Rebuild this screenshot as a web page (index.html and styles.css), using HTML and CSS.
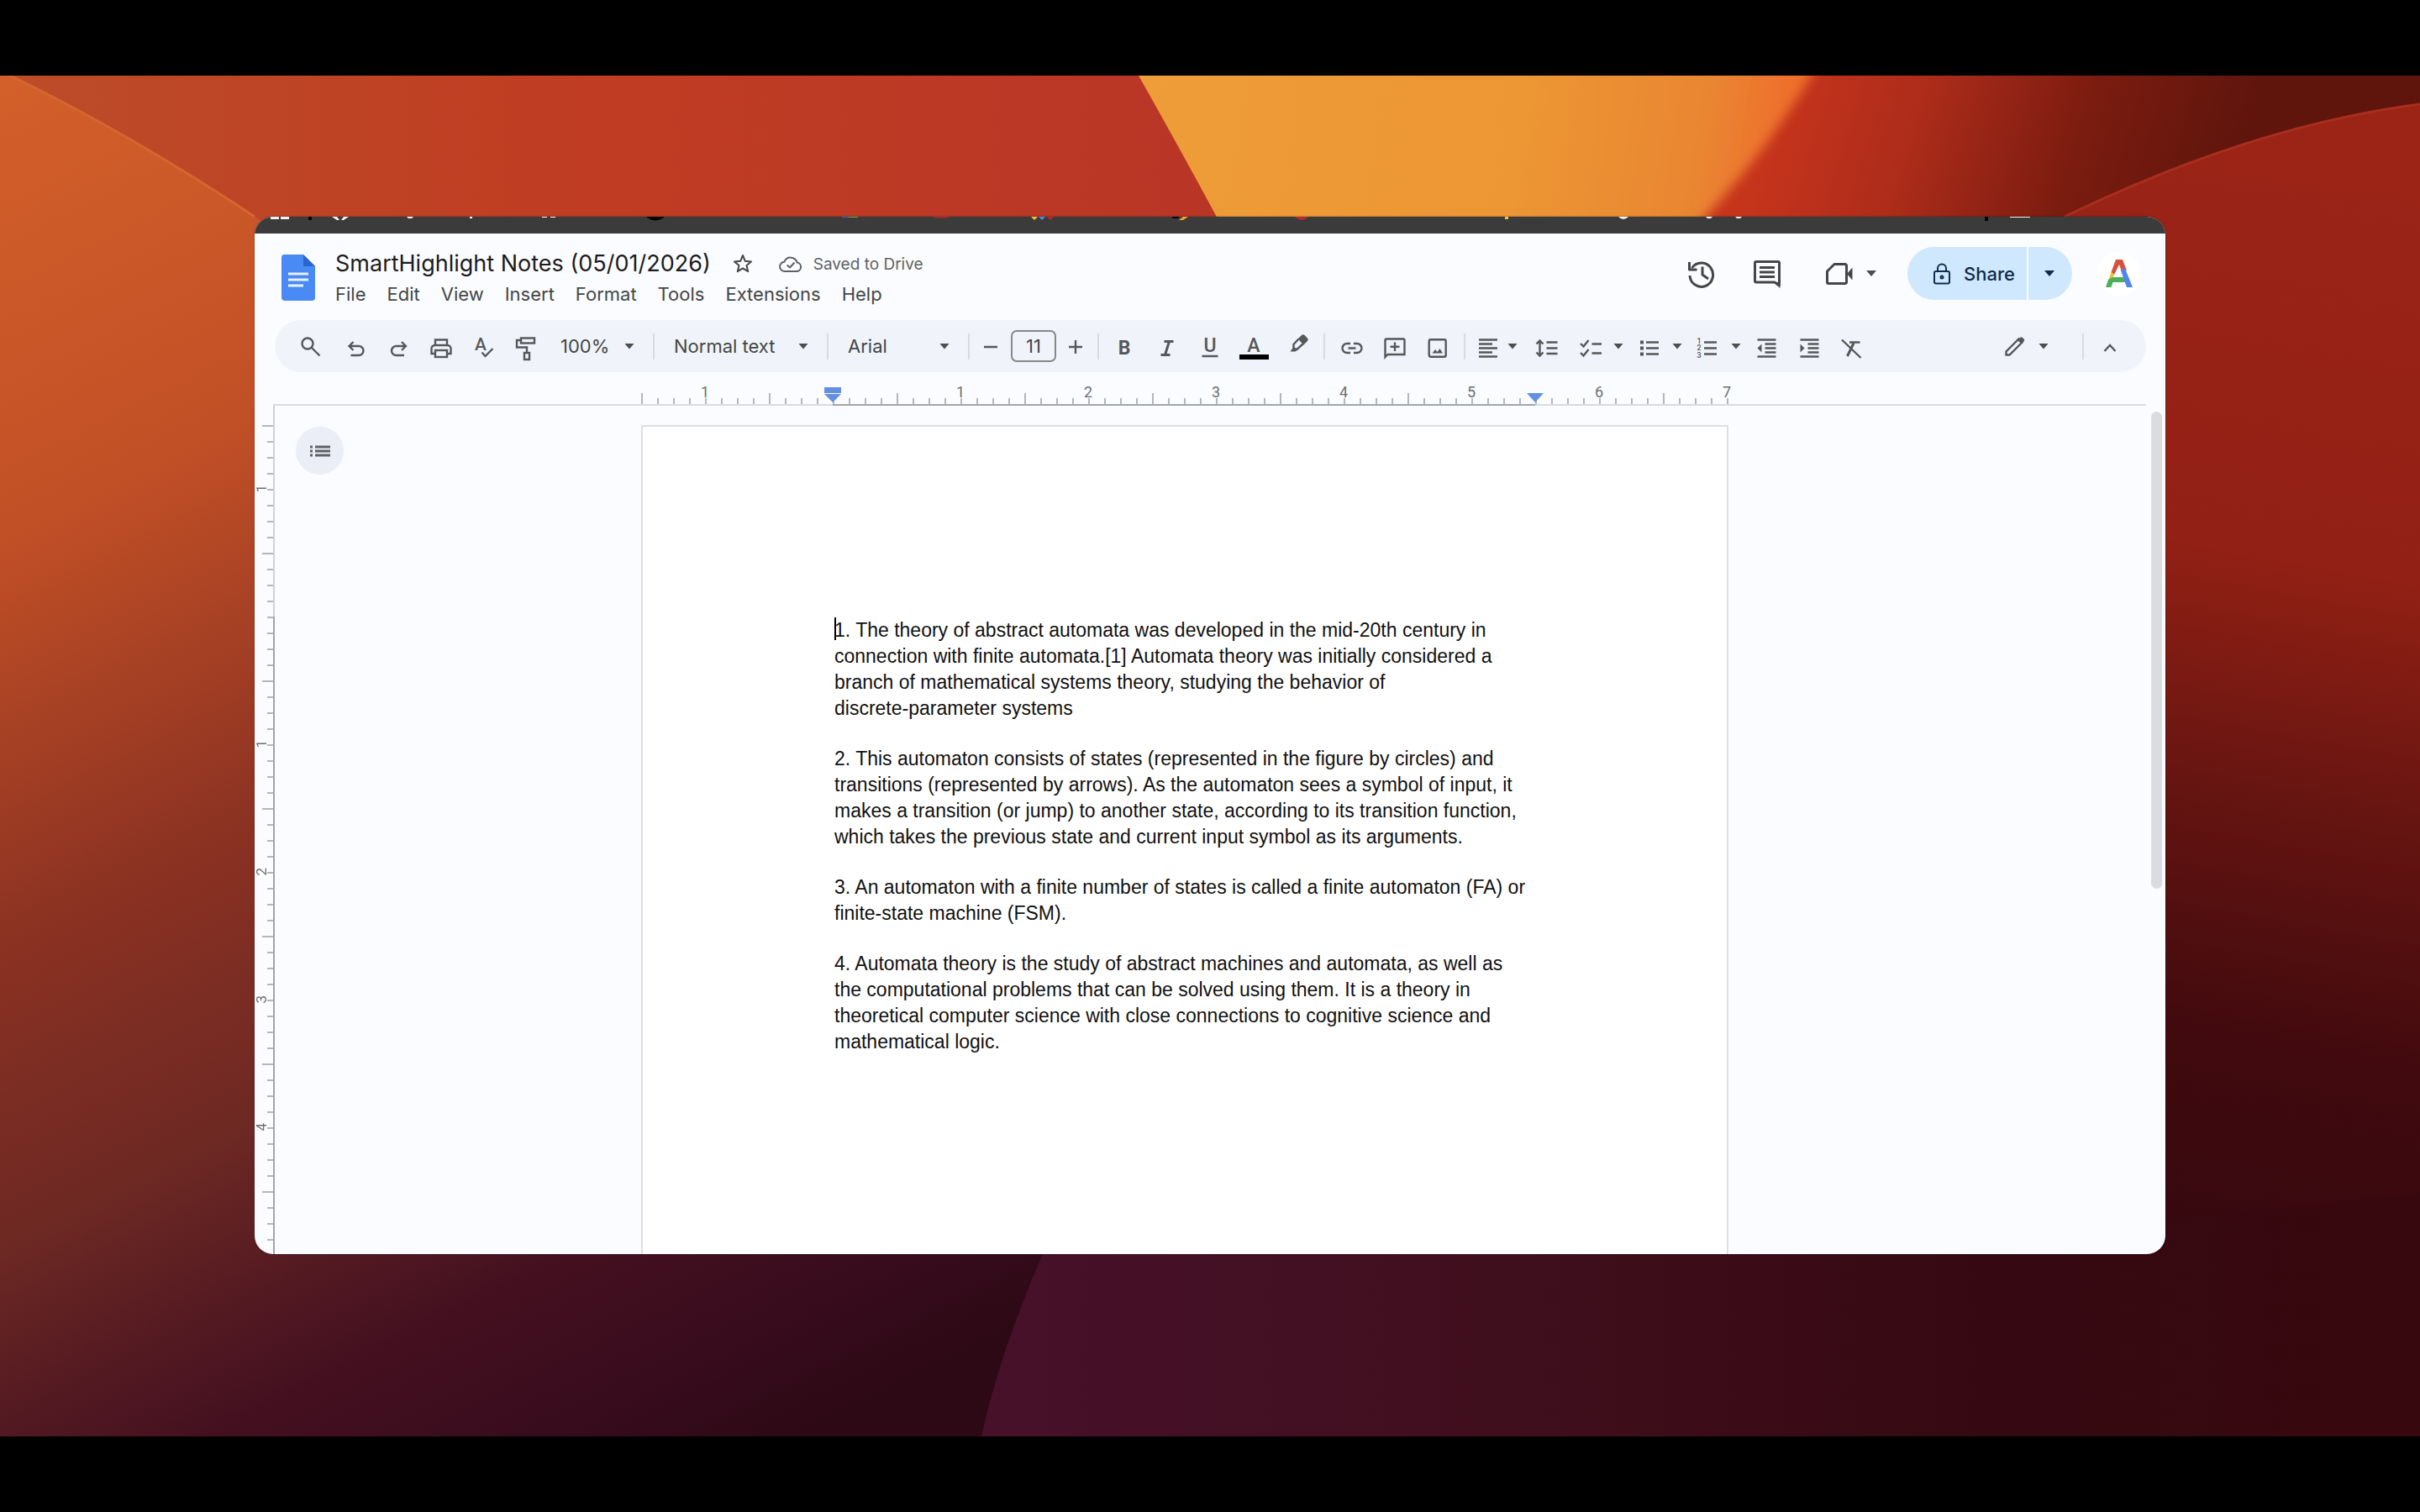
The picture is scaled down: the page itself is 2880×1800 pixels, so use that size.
FILE: index.html
```html
<!DOCTYPE html>
<html lang="en">
<head>
  <meta charset="UTF-8">
  <meta name="viewport" content="width=device-width, initial-scale=1.0">
  <title>SmartHighlight Notes (05/01/2026)</title>
  <link rel="stylesheet" href="styles.css">
</head>
<body>
  <main class="desktop">
    <svg class="wallpaper" viewBox="0 0 2880 1620" preserveAspectRatio="none" aria-hidden="true">
      <defs>
        <linearGradient id="w-top" x1="0" y1="0" x2="1" y2="0">
          <stop offset="0" stop-color="#bc4c29"/>
          <stop offset="0.25" stop-color="#c03c22"/>
          <stop offset="0.5" stop-color="#b93627"/>
        </linearGradient>
        <linearGradient id="w-left" gradientUnits="userSpaceOnUse" x1="0" y1="0" x2="840" y2="1680">
          <stop offset="0" stop-color="#d3602a"/>
          <stop offset="0.26" stop-color="#c25026"/>
          <stop offset="0.5" stop-color="#8a3122"/>
          <stop offset="0.67" stop-color="#6c2823"/>
          <stop offset="0.74" stop-color="#591d22"/>
          <stop offset="0.83" stop-color="#441020"/>
          <stop offset="0.94" stop-color="#360b1c"/>
          <stop offset="1" stop-color="#2c0914"/>
        </linearGradient>
        <linearGradient id="w-gold" gradientUnits="userSpaceOnUse" x1="1360" y1="0" x2="2110" y2="120">
          <stop offset="0" stop-color="#ee9d38"/>
          <stop offset="0.6" stop-color="#ec9634"/>
          <stop offset="0.88" stop-color="#e98632"/>
          <stop offset="1" stop-color="#ee702c"/>
        </linearGradient>
        <linearGradient id="w-dark" gradientUnits="userSpaceOnUse" x1="2100" y1="80" x2="2620" y2="240">
          <stop offset="0" stop-color="#c6341c"/>
          <stop offset="0.3" stop-color="#ad2c1a"/>
          <stop offset="0.65" stop-color="#7c1c10"/>
          <stop offset="1" stop-color="#5f150c"/>
        </linearGradient>
        <linearGradient id="w-right" gradientUnits="userSpaceOnUse" x1="2880" y1="60" x2="2640" y2="1380">
          <stop offset="0" stop-color="#9c2417"/>
          <stop offset="0.4" stop-color="#922014"/>
          <stop offset="0.62" stop-color="#641411"/>
          <stop offset="0.82" stop-color="#420a0e"/>
          <stop offset="1" stop-color="#36090f"/>
        </linearGradient>
        <linearGradient id="w-bottom" gradientUnits="userSpaceOnUse" x1="1170" y1="0" x2="2880" y2="0">
          <stop offset="0" stop-color="#47112a"/>
          <stop offset="0.35" stop-color="#400f1e"/>
          <stop offset="0.7" stop-color="#360912"/>
          <stop offset="1" stop-color="#37080d"/>
        </linearGradient>
        <filter id="w-soft" x="-10%" y="-10%" width="120%" height="120%">
          <feGaussianBlur stdDeviation="7"/>
        </filter>
      </defs>
      <rect width="2880" height="1620" fill="url(#w-top)"/>
      <path d="M1900-60H2900V1000H1900Z" fill="url(#w-dark)"/>
      <path d="M1700-40H2178Q2120 70 2030 168L1900 380H1700Z" fill="url(#w-gold)" filter="url(#w-soft)"/>
      <path d="M1355 0H1900V360H1550Q1440 150 1355 0Z" fill="url(#w-gold)"/>
      <path d="M1200 1300H2880V1620H1100Z" fill="url(#w-bottom)"/>
      <path d="M2300 290Q2377 200 2457 168Q2680 60 2880 34V1330L2300 1390Z" fill="url(#w-right)"/>
      <path d="M2457 168Q2680 60 2880 34" fill="none" stroke="#a92e1e" stroke-width="3"/>
      <path d="M0-6Q150 66 303 168C1000 600 1420 1000 1241 1403Q1190 1520 1168 1620H0Z" fill="url(#w-left)"/>
      <path d="M0-6Q150 66 303 168" fill="none" stroke="#d6652f" stroke-width="3"/>
    </svg>

    <div class="window">
      <div class="tabstrip">
        <!-- lower edge of the tab favicons -->
        <svg viewBox="0 0 2274 6" preserveAspectRatio="none" aria-hidden="true">
          <path d="M19 0h10v3H19zM31 0h10v3H31zM92 0l6 4h3l-3-4zM112 0l-6 4h-3l3-4zM181 0h8l-2 2h-4zM256 0h3v2h-3zM342 0h6v1h-6zM352 0h6v1h-6zM1623 0h12q-6 6-12 0zM1727 0h8l-2 2h-4zM1762 0h8l-2 2h-4zM2089 0h24v1h-24z" fill="#f4f4f4"/>
          <path d="M64 0h4v4h-4zM466 0h22q-11 9-22 0zM1092 0h8v2h-8zM2059 0h4v5h-4z" fill="#060606"/>
          <path d="M699 0h8v1h-8z" fill="#2f6fd0"/>
          <path d="M707 0h11v1h-11z" fill="#4fae54"/>
          <path d="M806 0h22q-11 3-22 0zM943 0h8l-4 4zM1238 0h16q-8 8-16 0z" fill="#b02a30"/>
          <path d="M924 0h8l-4 4zM1488 0h4v3h-4z" fill="#f2bd4a"/>
          <path d="M933 0h8l-4 4z" fill="#4b8fd8"/>
          <path d="M1100 4l5-4h6l-6 4z" fill="#f0a13a"/>
        </svg>
      </div>

      <header class="header">
        <a class="home" href="#" aria-label="Docs home">
          <svg width="40" height="55" viewBox="0 0 40 55">
            <path d="M3 0H26L40 14V51Q40 55 36 55H4Q0 55 0 51V4Q0 0 3 0Z" fill="#4a8af4"/>
            <path d="M26 0L40 14H26Z" fill="#2b66cf"/>
            <path d="M8 23H32M8 30H32M8 37H26" stroke="#e8f1fd" stroke-width="3"/>
          </svg>
        </a>
        <div class="doc-info">
          <div class="title-row">
            <h1 class="title">SmartHighlight Notes (05/01/2026)</h1>
            <button class="star" aria-label="Star">
              <svg width="24" height="24" viewBox="0 0 24 24" class="line">
                <path d="M12 2l2.800 6.800 7.200.6-5.500 4.700 1.700 7.100-6.200-3.800-6.200 3.800 1.700-7.100L2 9.400l7.200-.6z"/>
              </svg>
            </button>
            <button class="status">
              <svg width="28" height="22" viewBox="0 0 28 22" class="line">
                <path d="M7 20a5.600 5.600 0 0 1-.6-11.200A8 8 0 0 1 21.600 9.500A5.300 5.300 0 0 1 21.500 20Z"/>
                <path d="M9.500 12.500l3.500 3 5.500-6"/>
              </svg>
              Saved to Drive
            </button>
          </div>
          <nav class="menubar">
            <button>File</button>
            <button>Edit</button>
            <button>View</button>
            <button>Insert</button>
            <button>Format</button>
            <button>Tools</button>
            <button>Extensions</button>
            <button>Help</button>
          </nav>
        </div>
        <div class="header-actions">
          <button class="action" aria-label="Version history">
            <svg width="36" height="36" viewBox="0 0 36 36" class="line bold">
              <path d="M6.500 11A13.800 14.200 0 1 1 4 20"/>
              <path d="M19 9.500v9.500l7 5"/>
              <path d="M3.500 4v9h9"/>
            </svg>
          </button>
          <button class="action" aria-label="Comments">
            <svg width="36" height="36" viewBox="0 0 36 36" class="line bold">
              <path d="M5 3.500H31Q32.500 3.500 32.500 5V31L27 28H5Q3.500 28 3.500 26.500V5Q3.500 3.500 5 3.500Z"/>
              <path d="M9 10.500H27M9 16H27M9 21.500H27"/>
              <path d="M25 28H33.500V35z" class="solid"/>
            </svg>
          </button>
          <button class="action meet" aria-label="Meet">
            <svg width="36" height="36" viewBox="0 0 36 36" class="line bold">
              <path d="M12 6.500H24.500Q26.500 6.500 26.500 8.500V27.500Q26.500 29.500 24.500 29.500H5Q3.500 29.500 3.500 27.500V15Z"/>
              <path d="M27 18L33.500 10.500V25.500Z" class="solid"/>
            </svg>
            <span class="arrow"></span>
          </button>
          <div class="share">
            <button class="share-main">
              <svg width="22" height="26" viewBox="0 0 22 26" class="line">
                <rect x="2" y="10" width="18" height="14.500" rx="2"/>
                <path d="M6 10V6.500a5 5 0 0 1 10 0V10"/>
                <circle cx="11" cy="17" r="1.500"/>
              </svg>
              Share
            </button>
            <button class="share-more" aria-label="Sharing options"><span class="arrow"></span></button>
          </div>
          <a class="avatar" href="#" aria-label="Account">
            <svg width="32" height="33" viewBox="0 0 32 33">
              <path d="M12 0H20L25 13H18.500L16 6L10 18L6.500 15Z" fill="#d5523f"/>
              <path d="M6.500 15L10 18L8 24L3 25Z" fill="#f1c232"/>
              <path d="M3 24L8 21H22L23 27H8.500L6.500 33H0Z" fill="#4caf5a"/>
              <path d="M25 33L17.500 12L22.500 11L24 13L32 33Z" fill="#5285ec"/>
              <path d="M16 8L11.500 21H20.500Z" fill="#ffffff"/>
            </svg>
          </a>
        </div>
      </header>

      <div class="toolbar" role="toolbar">
        <button class="tool" aria-label="Search the menus">
          <svg class="icon" viewBox="0 0 30 30"><circle cx="11" cy="12" r="6.500"/><path d="M16 17l9.500 9.500"/></svg>
        </button>
        <button class="tool" aria-label="Undo">
          <svg class="icon" viewBox="0 0 30 30"><path d="M9.500 15H21a5.500 5.500 0 0 1 0 11H11.500M14.500 10l-5 5 5 5"/></svg>
        </button>
        <button class="tool" aria-label="Redo">
          <svg class="icon" viewBox="0 0 30 30"><path d="M26 15H14.500a5.500 5.500 0 0 0 0 11H24M21 10l5 5-5 5"/></svg>
        </button>
        <button class="tool" aria-label="Print">
          <svg class="icon" viewBox="0 0 30 30"><path d="M10 14V7.500H24V14M10 24H5.500V18a4 4 0 0 1 4-4H24.500a4 4 0 0 1 4 4V24H24"/><rect x="10" y="20" width="14" height="8"/></svg>
        </button>
        <button class="tool" aria-label="Spelling and grammar check">
          <svg class="icon" viewBox="0 0 30 30"><text x="13" y="20" class="glyph glyph-small">A</text><path d="M14.500 22.500l4 4.500 9-9"/></svg>
        </button>
        <button class="tool" aria-label="Paint format">
          <svg class="icon" viewBox="0 0 30 30"><rect x="10" y="5.500" width="16" height="6"/><path d="M10 8H5V16.500H17V23"/><rect x="14" y="23" width="6" height="8"/></svg>
        </button>
        <label class="dropdown dropdown-zoom">
          <select aria-label="Zoom"><option>100%</option></select>
          <span class="arrow"></span>
        </label>
        <span class="sep"></span>
        <label class="dropdown dropdown-style">
          <select aria-label="Styles"><option>Normal text</option></select>
          <span class="arrow"></span>
        </label>
        <span class="sep"></span>
        <label class="dropdown dropdown-font">
          <select aria-label="Font"><option>Arial</option></select>
          <span class="arrow"></span>
        </label>
        <span class="sep"></span>
        <div class="font-size">
          <button aria-label="Decrease font size">
            <svg class="icon" viewBox="0 0 30 30"><path d="M7 16H23"/></svg>
          </button>
          <input type="text" value="11" aria-label="Font size">
          <button aria-label="Increase font size">
            <svg class="icon" viewBox="0 0 30 30"><path d="M6 16H22M14 8V24"/></svg>
          </button>
        </div>
        <span class="sep"></span>
        <button class="tool" aria-label="Bold">
          <svg class="icon" viewBox="0 0 30 30"><text x="13" y="25" class="glyph glyph-bold">B</text></svg>
        </button>
        <button class="tool" aria-label="Italic">
          <svg class="icon" viewBox="0 0 30 30"><path d="M9.500 9.500H20.500M5.500 25.500H16.500M15.500 9.500L10.500 25.500" stroke-width="3"/></svg>
        </button>
        <button class="tool" aria-label="Underline">
          <svg class="icon" viewBox="0 0 30 30"><text x="13" y="22" class="glyph">U</text><path d="M3.500 27H22.500"/></svg>
        </button>
        <button class="tool" aria-label="Text color">
          <svg class="icon" viewBox="0 0 30 30"><text x="14" y="22" class="glyph">A</text><rect x="-3" y="25" width="35" height="6" class="swatch"/></svg>
        </button>
        <button class="tool" aria-label="Highlight color">
          <svg class="icon" viewBox="0 0 30 30"><path d="M16.500 6.500L10.500 13v5l4 1 7.500-7"/><path d="M15.500 6.500L20 2q2-1.500 3.500 0L27 5.500q1.500 2 0 3.500L22.500 13.500z" class="solid"/><path d="M6.500 21.500l4-5.500 4 4-2 1.500z" class="solid"/></svg>
        </button>
        <span class="sep"></span>
        <button class="tool" aria-label="Insert link">
          <svg class="icon" viewBox="0 0 30 30"><path d="M13 12H9a5.500 5.500 0 0 0 0 11h4M17 12h4a5.500 5.500 0 0 1 0 11h-4M10.500 17.500h9"/></svg>
        </button>
        <button class="tool" aria-label="Add comment">
          <svg class="icon" viewBox="0 0 30 30"><path d="M3.500 28V8Q3.500 6.500 5 6.500H25Q26.500 6.500 26.500 8V25H6.500zM15 10.500V21M9.500 15.700H20.500"/></svg>
        </button>
        <button class="tool" aria-label="Insert image">
          <svg class="icon" viewBox="0 0 30 30"><rect x="4.700" y="7.200" width="20" height="20.500" rx="2"/><path d="M8.500 23.500l3.500-4.500 2.500 3 3-4 3.500 5.500z" class="solid"/></svg>
        </button>
        <span class="sep"></span>
        <button class="tool-menu tool-menu-tight" aria-label="Align">
          <svg class="icon" viewBox="0 0 30 30"><path d="M4 7.500H26M4 12.500H20M4 17.500H26M4 22.500H20M4 27.500H26"/></svg>
          <span class="arrow"></span>
        </button>
        <button class="tool" aria-label="Line &amp; paragraph spacing">
          <svg class="icon" viewBox="0 0 30 30"><path d="M6.500 9V26M2.500 12.500l4-4 4 4M2.500 22.500l4 4 4-4M14.500 10.500H27.500M14.500 17.500H27.500M14.500 24H27.500"/></svg>
        </button>
        <button class="tool-menu" aria-label="Checklist menu">
          <svg class="icon" viewBox="0 0 30 30"><path d="M3 12l3.500 3.500 6-7.500M3 23l3.500 3.500 6-7.500M16.500 12.500H28M16.500 23.500H28"/></svg>
          <span class="arrow"></span>
        </button>
        <button class="tool-menu" aria-label="Bulleted list menu">
          <svg class="icon" viewBox="0 0 30 30"><path d="M11 10.500H26M11 17.500H26M11 24.500H26"/><path d="M4 8.500h4v4H4zM4 15.500h4v4H4zM4 22.500h4v4H4z" class="solid"/></svg>
          <span class="arrow"></span>
        </button>
        <button class="tool-menu" aria-label="Numbered list menu">
          <svg class="icon" viewBox="0 0 30 30"><path d="M10 10.500H25M10 17.500H25M10 24.500H25"/><text x="4" y="12" class="digit">1</text><text x="4" y="20" class="digit">2</text><text x="4" y="29" class="digit">3</text></svg>
          <span class="arrow"></span>
        </button>
        <button class="tool" aria-label="Decrease indent">
          <svg class="icon" viewBox="0 0 30 30"><path d="M4.500 7.500H26.500M13.500 12.500H26.500M13.500 17.500H26.500M13.500 22.500H26.500M4.500 27.500H26.500"/><path d="M9.500 12.500v10l-5-5z" class="solid"/></svg>
        </button>
        <button class="tool" aria-label="Increase indent">
          <svg class="icon" viewBox="0 0 30 30"><path d="M4.500 7.500H26.500M13.500 12.500H26.500M13.500 17.500H26.500M13.500 22.500H26.500M4.500 27.500H26.500"/><path d="M4.500 12.500v10l5-5z" class="solid"/></svg>
        </button>
        <button class="tool" aria-label="Clear formatting">
          <svg class="icon" viewBox="0 0 30 30"><path d="M12 10.500H24.500M3 7.500L25.500 29"/><path d="M17 11.500L9.500 27" stroke-width="3"/></svg>
        </button>
        <button class="tool-menu tool-mode" aria-label="Editing mode">
          <svg class="icon" viewBox="0 0 30 30"><path d="M3.500 25.500V21.500L18.500 6.500L22.500 10.500L7.500 25.500z"/><path d="M17 8l3-3q1.500-1.500 3 0l1.500 1.500q1.500 1.500 0 3L21.500 12.500z" class="solid"/></svg>
          <span class="arrow"></span>
        </button>
        <span class="sep"></span>
        <button class="tool" aria-label="Hide the menus">
          <svg class="icon" viewBox="0 0 30 30"><path d="M7.500 21l6.500-7 6.500 7"/></svg>
        </button>
      </div>

      <div class="ruler">
        <div class="ruler-track">
          <span class="inch">1</span>
          <span class="inch"></span>
          <span class="inch">1</span>
          <span class="inch">2</span>
          <span class="inch">3</span>
          <span class="inch">4</span>
          <span class="inch">5</span>
          <span class="inch">6</span>
          <span class="inch inch-last">7</span>
          <span class="ruler-range"></span>
          <svg class="marker marker-left" width="20" height="18" viewBox="0 0 20 18" aria-hidden="true">
            <path d="M0 0H20V7H0zM0 8H20L10 18z"/>
          </svg>
          <svg class="marker marker-right" width="20" height="18" viewBox="0 0 20 18" aria-hidden="true">
            <path d="M0 7H20L10 18z"/>
          </svg>
        </div>
      </div>

      <div class="workspace">
        <div class="vruler">
          <span class="vinch"><b>1</b></span>
          <span class="vinch vinch-split"></span>
          <span class="vinch vinch-dark"><b>1</b></span>
          <span class="vinch vinch-dark"><b>2</b></span>
          <span class="vinch vinch-dark"><b>3</b></span>
          <span class="vinch vinch-dark"><b>4</b></span>
          <span class="vinch vinch-dark"></span>
        </div>
        <div class="canvas">
          <button class="outline" aria-label="Show document outline">
            <svg width="24" height="16" viewBox="0 0 24 16">
              <path d="M6 3H24M6 8H24M6 13H24" stroke="#5f6368" stroke-width="3"/>
              <path d="M0 3H3M0 8H3M0 13H3" stroke="#5f6368" stroke-width="3"/>
            </svg>
          </button>
          <article class="page">
            <p><span class="caret"></span>1. The theory of abstract automata was developed in the mid-20th century in connection with finite automata.[1] Automata theory was initially considered a branch of mathematical systems theory, studying the behavior of <span class="nobreak">discrete-parameter</span> systems</p>
            <p>2. This automaton consists of states (represented in the figure by circles) and transitions (represented by arrows). As the automaton sees a symbol of input, it makes a transition (or jump) to another state, according to its transition function, which takes the previous state and current input symbol as its arguments.</p>
            <p>3. An automaton with a finite number of states is called a finite automaton (FA) or finite-state machine (FSM).</p>
            <p>4. Automata theory is the study of abstract machines and automata, as well as the computational problems that can be solved using them. It is a theory in theoretical computer science with close connections to cognitive science and mathematical logic.</p>
          </article>
        </div>
        <div class="scrollbar"><div class="thumb"></div></div>
      </div>
    </div>
  </main>
</body>
</html>
```
FILE: styles.css
```css
* {
  box-sizing: border-box;
}

body {
  margin: 0;
  height: 100vh;
  padding: 90px 0;
  background: #000;
  font-family: Inter, Roboto, sans-serif;
  font-size: 22px;
  color: #444746;
  overflow: hidden;
}

button,
select,
input {
  font: inherit;
  color: inherit;
  border: none;
  background: none;
  padding: 0;
  margin: 0;
}

button {
  cursor: pointer;
}

svg {
  display: block;
  flex: none;
}

/* desktop */
.desktop {
  position: relative;
  height: 100%;
  padding: 168px 303px 217px;
  overflow: hidden;
}

.wallpaper {
  position: absolute;
  inset: 0;
  width: 100%;
  height: 100%;
}

.window {
  position: relative;
  height: 100%;
  display: flex;
  flex-direction: column;
  background: #fbfcff;
  border-radius: 22px;
  overflow: hidden;
  box-shadow: 0 0 2px rgba(0, 0, 0, 0.5);
}

.tabstrip {
  height: 20px;
  flex: none;
  background: #3b3b3b;
}

.tabstrip svg {
  width: 100%;
  height: 6px;
}

/* icons */
.line {
  fill: none;
  stroke: currentColor;
  stroke-width: 2;
  stroke-linejoin: round;
}

.bold {
  stroke-width: 3;
}

.icon {
  width: 30px;
  height: 30px;
  overflow: visible;
  fill: none;
  stroke: #55585a;
  stroke-width: 2.4;
}

.solid {
  fill: currentColor;
  stroke: none;
}

.icon .solid {
  fill: #55585a;
}

.swatch {
  fill: #000;
  stroke: none;
}

.glyph,
.digit {
  font-family: Roboto, sans-serif;
  font-size: 23px;
  font-weight: 500;
  text-anchor: middle;
  fill: #55585a;
  stroke: none;
}

.glyph-small {
  font-size: 21px;
}

.glyph-bold {
  font-weight: 700;
}

.digit {
  font-size: 9px;
}

.arrow {
  width: 12px;
  height: 7px;
  flex: none;
  background: #4c4f50;
  clip-path: polygon(0 0, 100% 0, 50% 100%);
}

/* header */
.header {
  height: 103px;
  flex: none;
  display: flex;
  align-items: flex-start;
  padding: 0 29px 0 32px;
}

.home {
  margin-top: 25px;
}

.doc-info {
  margin: 18px 0 0 24px;
}

.title-row {
  display: flex;
  align-items: center;
  height: 36px;
}

.title {
  margin: 0;
  font-size: 27px;
  font-weight: 400;
  line-height: 36px;
  color: #1b1c1d;
}

.star {
  margin-left: 26px;
}

.status {
  display: flex;
  align-items: center;
  gap: 13px;
  margin-left: 31px;
  font-size: 19px;
  color: #5f6264;
}

.menubar {
  display: flex;
  gap: 25px;
}

.menubar button {
  line-height: 36px;
}

.header-actions {
  display: flex;
  align-items: center;
  height: 63px;
  margin: 16px 0 0 auto;
}

.action {
  width: 78px;
  height: 63px;
  display: flex;
  align-items: center;
  justify-content: center;
}

.meet {
  width: 98px;
  margin-right: 30px;
  gap: 14px;
  justify-content: flex-end;
  padding-right: 7px;
}

.share {
  display: flex;
  gap: 2px;
  height: 63px;
  border-radius: 32px;
  overflow: hidden;
  font-weight: 500;
  color: #0f2b4d;
}

.share button {
  display: flex;
  align-items: center;
  background: #d0e8fd;
}

.share-main {
  gap: 15px;
  padding: 0 14px 0 30px;
}

.share-more {
  padding: 0 21px 0 19px;
}

.share .arrow {
  background: #0f2b4d;
}

.avatar {
  width: 52px;
  height: 52px;
  margin-left: 30px;
  display: flex;
  align-items: center;
  justify-content: center;
  border-radius: 50%;
  background: #fff;
}

/* toolbar */
.toolbar {
  height: 62px;
  flex: none;
  display: flex;
  align-items: center;
  margin: 0 23px 0 24px;
  padding: 0 17px;
  border-radius: 31px;
  background: #f0f4fa;
}

.tool {
  width: 51px;
  height: 50px;
  flex: none;
  display: flex;
  align-items: center;
  justify-content: center;
}

.tool-menu {
  width: 70px;
  height: 50px;
  flex: none;
  display: flex;
  align-items: center;
  gap: 12px;
  padding-left: 12px;
}

.tool-menu-tight {
  width: 65px;
  gap: 8px;
  padding-left: 6px;
}

.tool-mode {
  margin: 0 30px 0 auto;
}

.sep {
  width: 2px;
  height: 31px;
  flex: none;
  margin: 0 6px;
  background: #d8dbdf;
}

.dropdown {
  display: grid;
  align-items: center;
  height: 50px;
  flex: none;
}

.dropdown select,
.dropdown .arrow {
  grid-area: 1 / 1;
}

.dropdown select {
  appearance: none;
  width: 100%;
  height: 100%;
  padding-left: 17px;
}

.dropdown .arrow {
  justify-self: end;
  margin-right: 16px;
  pointer-events: none;
}

.dropdown-zoom {
  width: 121px;
}

.dropdown-style {
  width: 193px;
}

.dropdown-font {
  width: 154px;
}

.font-size {
  display: flex;
  align-items: center;
  gap: 5px;
  flex: none;
}

.font-size button {
  width: 38px;
  height: 38px;
  display: flex;
  align-items: center;
  justify-content: center;
}

.font-size input {
  width: 54px;
  height: 38px;
  text-align: center;
  border: 2px solid #85888a;
  border-radius: 7px;
}

/* rulers */
.ruler {
  height: 40px;
  flex: none;
  display: flex;
  justify-content: center;
  margin: 0 23px 0 22px;
  padding-right: 59px;
  border-bottom: 2px solid #d9dbde;
}

.ruler-track {
  position: relative;
  width: 1294px;
  display: flex;
}

.inch {
  width: 152px;
  flex: none;
  padding-top: 14px;
  font-family: Roboto, sans-serif;
  font-size: 18px;
  line-height: 20px;
  text-align: center;
  color: #6b6e70;
  background:
    linear-gradient(90deg, #b4b7b9 2px, transparent 2px) left bottom / 152px 13px no-repeat,
    repeating-linear-gradient(90deg, #b4b7b9 0 2px, transparent 2px 19px) left bottom / 100% 7px no-repeat;
}

.inch-last {
  background-size: 152px 13px, 78px 7px;
}

.ruler-range {
  position: absolute;
  left: 228px;
  bottom: -2px;
  width: 836px;
  height: 2px;
  background: #a3a6a8;
}

.marker {
  position: absolute;
  bottom: 2px;
  fill: #6490e2;
}

.marker-left {
  left: 218px;
}

.marker-right {
  left: 1054px;
}

.workspace {
  flex: 1;
  min-height: 0;
  display: flex;
}

.vruler {
  width: 24px;
  flex: none;
  padding-top: 23px;
  overflow: hidden;
  background: linear-gradient(#d0d2d5, #d0d2d5) right top / 2px 252px no-repeat;
}

.vinch {
  display: flex;
  align-items: center;
  height: 152px;
  border-right: 2px solid transparent;
  background:
    linear-gradient(#b4b7b9 2px, transparent 2px) right top / 13px 152px no-repeat,
    repeating-linear-gradient(#b4b7b9 0 2px, transparent 2px 19px) right top / 7px 100% no-repeat;
}

.vinch b {
  width: 16px;
  font-family: Roboto, sans-serif;
  font-size: 17px;
  font-weight: 400;
  line-height: 16px;
  color: #6b6e70;
  writing-mode: vertical-rl;
  transform: rotate(180deg);
}

.vinch-dark {
  border-right-color: #a3a6a8;
}

.vinch-split {
  border-right: 2px solid;
  border-image: linear-gradient(transparent 50%, #a3a6a8 50%) 1;
}

/* document */
.canvas {
  position: relative;
  flex: 1;
  display: flex;
  justify-content: center;
  padding: 23px 61px 0 0;
}

.outline {
  position: absolute;
  left: 25px;
  top: 25px;
  width: 57px;
  height: 57px;
  display: flex;
  align-items: center;
  justify-content: center;
  border-radius: 50%;
  background: #ebeef7;
}

.page {
  width: 1294px;
  padding: 227px 236px 0 228px;
  border: 2px solid #dcdfe0;
  border-bottom: none;
  background: #fff;
  font-family: "Liberation Sans", Arial, sans-serif;
  font-size: 23px;
  line-height: 31px;
  color: #111;
}

.page p {
  margin: 0 0 29px;
}

.nobreak {
  white-space: nowrap;
}

.caret {
  position: absolute;
  width: 2px;
  height: 27px;
  background: #000;
}

.scrollbar {
  width: 23px;
  flex: none;
  padding: 7px 4px 0 6px;
}

.thumb {
  height: 568px;
  border-radius: 7px;
  background: #dadce0;
}
```
